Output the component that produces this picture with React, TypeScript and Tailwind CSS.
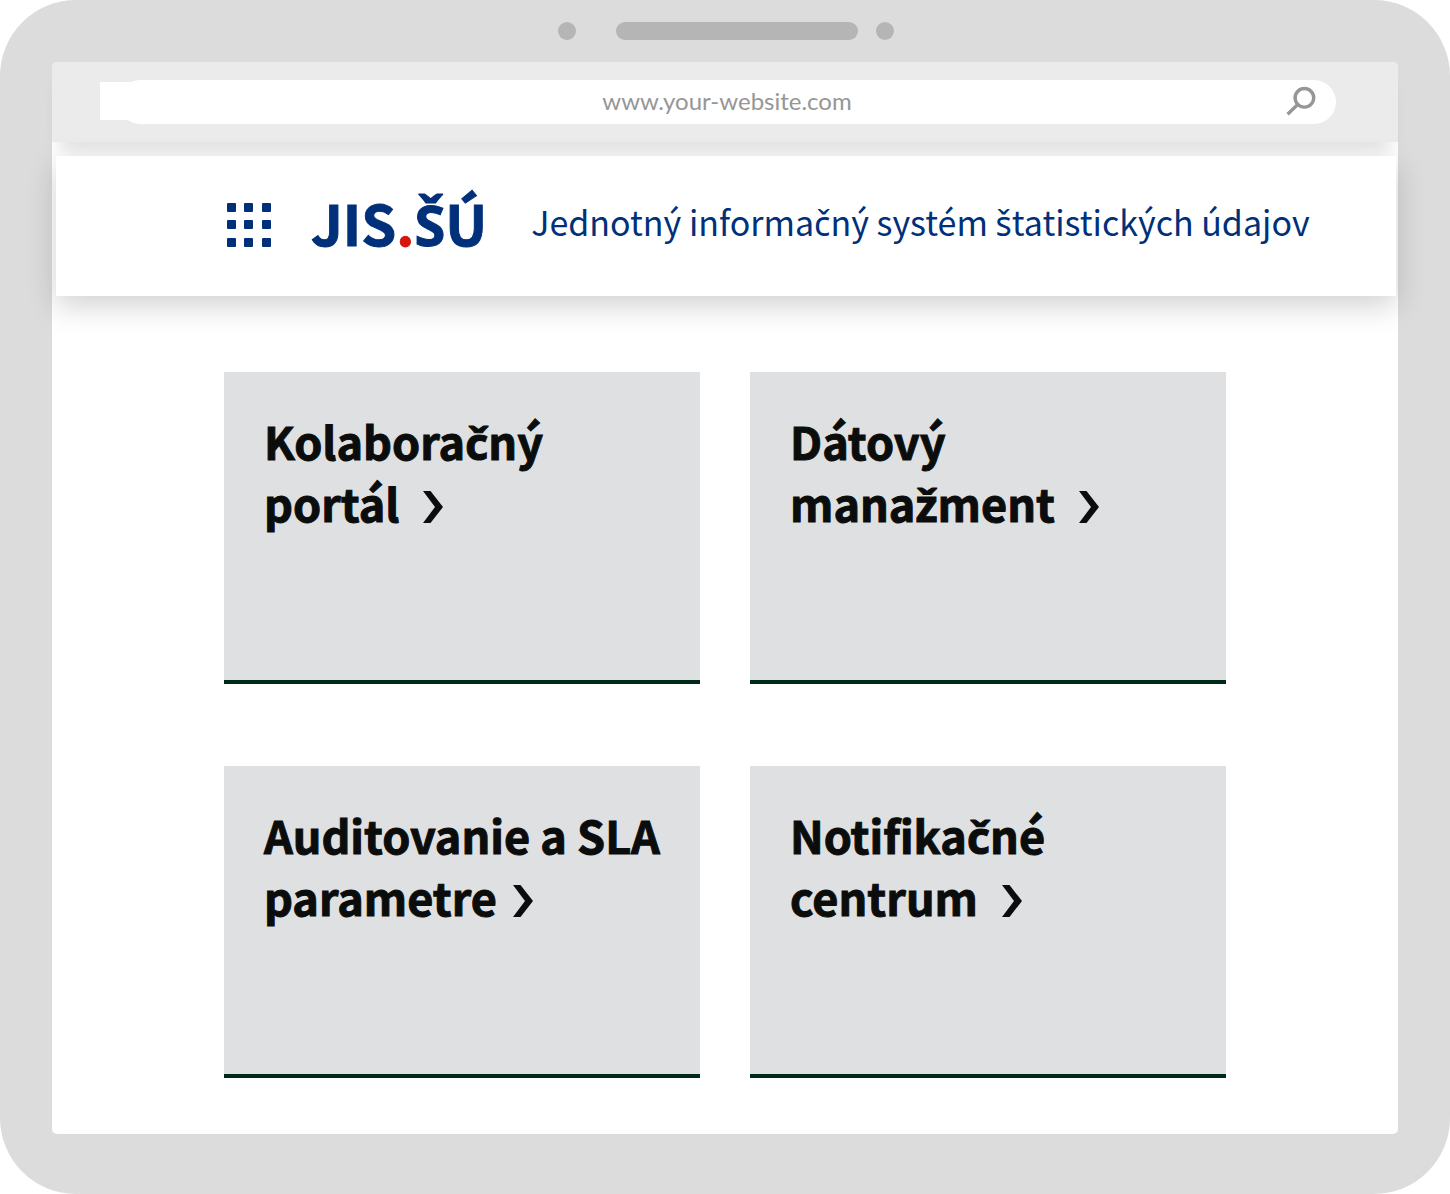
/**
 * JIS.ŠÚ portal home inside a device frame
 */
const cards = [
  { title: 'Kolaboračný', last: 'portál', gap: 'ml-6' },
  { title: 'Dátový', last: 'manažment', gap: 'ml-6' },
  { title: 'Auditovanie a SLA', last: 'parametre', gap: 'ml-4' },
  { title: 'Notifikačné', last: 'centrum', gap: 'ml-6' },
];

const dots = [0, 17, 35];

// The CJK family has no caron letters, so those come from Noto Sans
function Text({ children }: { children: string }) {
  return (
    <span>
      {children.split(/([čšžŠ])/).map((part, i) =>
        i % 2 ? (
          <span key={i} className="leading-none font-['Noto_Sans',sans-serif]">
            {part}
          </span>
        ) : (
          part
        )
      )}
    </span>
  );
}

function Chevron() {
  return (
    <svg className="w-5 h-8" viewBox="0 0 20 32" fill="currentColor" aria-hidden="true">
      <path d="M0 0H7.5L20 16L7.5 32H0L12 16Z" />
    </svg>
  );
}

function AppsIcon() {
  return (
    <svg className="w-11 h-11" viewBox="0 0 44 44" fill="currentColor" aria-hidden="true">
      {dots.map((y) => dots.map((x) => <rect key={`${x}-${y}`} x={x} y={y} width="9" height="9" rx="1" />))}
    </svg>
  );
}

export default function App() {
  return (
    <div className="min-h-screen flex flex-col bg-[#dcdcdc] rounded-[76px] px-[52px] pb-[60px] font-['Noto_Sans_CJK_SC','Noto_Sans',sans-serif]">
      {/* Camera and speaker */}
      <div className="h-[62px] flex justify-center items-center pl-[2px]">
        <span className="w-[18px] h-[18px] rounded-full bg-[#b5b5b5]" />
        <span className="w-[242px] h-[18px] rounded-full bg-[#b5b5b5] ml-10 mr-[18px]" />
        <span className="w-[18px] h-[18px] rounded-full bg-[#b5b5b5]" />
      </div>

      <div className="flex-1 bg-white rounded-[5px]">
        {/* Address bar */}
        <div className="relative z-10 h-20 flex items-center bg-[#ebebeb] rounded-t-[5px] pl-12 pr-[62px] shadow-[0_16px_16px_-8px_rgba(0,0,0,0.12)]">
          <span className="w-10 h-[38px] mb-[2px] -mr-[22px] bg-white" />
          <form className="relative flex-1 h-11 flex items-center bg-white rounded-full">
            <input
              type="text"
              aria-label="URL"
              defaultValue="www.your-website.com"
              className="w-full px-16 pb-[2px] text-center text-[24px] leading-8 text-[#969696] bg-transparent outline-none font-['Lato',sans-serif]"
            />
            <button type="button" aria-label="Search" className="absolute right-5 top-[6px] text-[#969696]">
              <svg className="w-[30px] h-[30px]" viewBox="0 0 30 30" fill="none" stroke="currentColor" strokeWidth="3.4">
                <circle cx="18.4" cy="11.8" r="9.3" />
                <path d="M11.7 18.5L1.6 28.2" />
              </svg>
            </button>
          </form>
        </div>

        {/* Header */}
        <div className="pt-[14px] pl-1 pr-[2px]">
          <header className="relative z-20 h-[140px] flex items-center pl-[171px] pb-[2px] bg-white text-[#00307a] shadow-[0_10px_28px_rgba(0,0,0,0.18)]">
            <button type="button" aria-label="Menu">
              <AppsIcon />
            </button>
            <a
              href="#"
              className="ml-10 pb-[6px] text-[56px] leading-[80px] font-bold whitespace-nowrap [-webkit-text-stroke:1px]"
            >
              JIS<span className="text-[#d4180f]">.</span>
              <Text>ŠÚ</Text>
            </a>
            <p className="ml-11 pb-[6px] text-[34px] leading-[80px] whitespace-nowrap">
              <Text>Jednotný informačný systém štatistických údajov</Text>
            </p>
          </header>
        </div>

        {/* Cards */}
        <main className="grid grid-cols-2 gap-x-[50px] gap-y-[82px] px-[172px] pt-[76px] pb-14">
          {cards.map((card) => (
            <a
              key={card.last}
              href="#"
              className="h-[312px] px-10 pt-[38px] bg-[#dfe0e2] border-b-4 border-[#002a18] text-[#0b0d0c]"
            >
              <h2 className="text-[45px] leading-[62px] font-bold whitespace-nowrap [-webkit-text-stroke:1px]">
                <Text>{card.title}</Text>
                <span className="flex items-center">
                  <Text>{card.last}</Text>
                  <span className={`pt-2 ${card.gap}`}>
                    <Chevron />
                  </span>
                </span>
              </h2>
            </a>
          ))}
        </main>
      </div>
    </div>
  );
}
